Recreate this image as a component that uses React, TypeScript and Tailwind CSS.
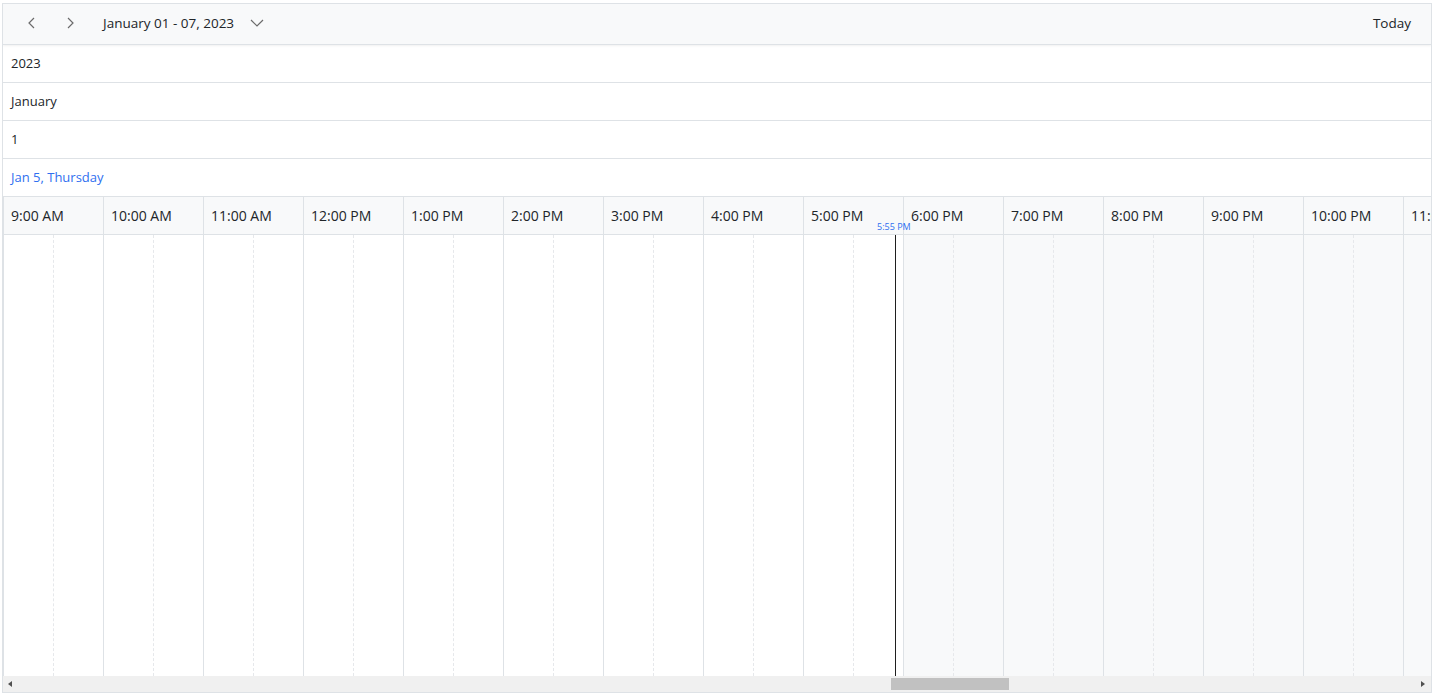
import React from 'react';

const hours = [
  '9:00 AM', '10:00 AM', '11:00 AM', '12:00 PM', '1:00 PM', '2:00 PM', '3:00 PM', '4:00 PM',
  '5:00 PM', '6:00 PM', '7:00 PM', '8:00 PM', '9:00 PM', '10:00 PM', '11:00 PM',
];

const font = { fontFamily: '"Open Sans", "Noto Sans", sans-serif' };

const Chevron: React.FC<{ dir: 'left' | 'right' | 'down' }> = ({ dir }) => {
  const d = dir === 'left' ? 'M10 3 L5 8 L10 13' : dir === 'right' ? 'M6 3 L11 8 L6 13' : 'M2 5 L8 11 L14 5';
  return (
    <svg width="16" height="16" viewBox="0 0 16 16" fill="none" stroke="#6b6b6b" strokeWidth="1.2">
      <path d={d} />
    </svg>
  );
};

const HeaderRow: React.FC<{ children: React.ReactNode; blue?: boolean }> = ({ children, blue }) => (
  <div className={`h-[38px] shrink-0 flex items-center pl-2 text-[13px] border-b border-[#dee2e6] ${blue ? 'text-[#2f6ff0]' : 'text-[#212529]'}`}>
    {children}
  </div>
);

export default function App() {
  return (
    <div className="w-[1436px] h-[698px] bg-white pt-[3px] pl-[2px]" style={font}>
      <div className="w-[1430px] h-[690px] border border-[#dee2e6] flex flex-col overflow-hidden">
        {/* toolbar */}
        <div className="h-[41px] shrink-0 bg-[#f8f9fa] border-b border-[#dee2e6] shadow-[0_1px_2px_rgba(0,0,0,0.06)] flex items-center pb-[2px]">
          <div className="w-[24px] ml-[17px] flex justify-center"><Chevron dir="left" /></div>
          <div className="w-[24px] ml-[14px] flex justify-center"><Chevron dir="right" /></div>
          <span className="ml-[21px] text-[13.5px] text-[#212529]">January 01 - 07, 2023</span>
          <span className="ml-[15px] flex"><Chevron dir="down" /></span>
          <span className="ml-auto mr-[20px] text-[13.5px] text-[#212529]">Today</span>
        </div>

        <HeaderRow>2023</HeaderRow>
        <HeaderRow>January</HeaderRow>
        <HeaderRow>1</HeaderRow>
        <HeaderRow blue>Jan 5, Thursday</HeaderRow>

        {/* time header */}
        <div className="h-[38px] shrink-0 flex bg-[#f8f9fa] border-b border-[#dee2e6] relative">
          {hours.map((h) => (
            <div key={h} className="w-[100px] shrink-0 border-l border-[#dee2e6] flex items-center pl-[7px] text-[14px] text-[#212529] whitespace-nowrap">
              {h}
            </div>
          ))}
          <span className="absolute left-[874px] top-[25px] text-[9px] leading-[10px] text-[#2f6ff0]">5:55 PM</span>
        </div>

        {/* grid */}
        <div className="flex-1 flex relative">
          {hours.map((h, i) => (
            <div key={h} className={`w-[100px] shrink-0 flex border-l border-[#dee2e6] ${i >= 9 ? 'bg-[#f8f9fa]' : 'bg-white'}`}>
              <div className="w-[50px] border-r border-dashed border-[#e6e8eb]" />
              <div className="w-[49px]" />
            </div>
          ))}
          <div className="absolute left-[892px] top-0 bottom-0 w-px bg-[#1f1f1f]" />
        </div>

        {/* scrollbar */}
        <div className="h-[16px] shrink-0 bg-[#f0f0f0] flex items-center">
          <svg width="16" height="16" viewBox="0 0 16 16" className="shrink-0">
            <path d="M9 5 L5 8 L9 11 Z" fill="#505050" />
          </svg>
          <div className="flex-1 h-full flex items-center">
            <div className="ml-[872px] w-[118px] h-[12px] bg-[#c1c1c1]" />
          </div>
          <svg width="16" height="16" viewBox="0 0 16 16" className="shrink-0 mr-[1px]">
            <path d="M7 5 L11 8 L7 11 Z" fill="#505050" />
          </svg>
        </div>
      </div>
    </div>
  );
}
